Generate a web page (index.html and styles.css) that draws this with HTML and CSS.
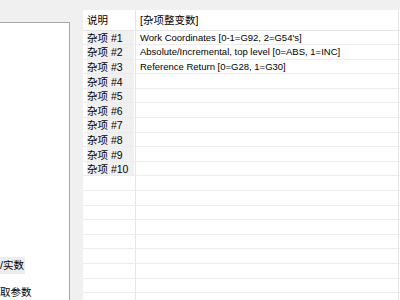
FILE: index.html
```html
<!DOCTYPE html>
<html lang="zh">
<head>
<meta charset="utf-8">
<title>杂项整变数</title>
<link rel="stylesheet" href="styles.css">
</head>
<body>
<div class="app">
  <div class="side">
    <ul class="tree">
      <li class="item"><span class="sel">/实数</span></li>
      <li class="item second"><span>取参数</span></li>
    </ul>
  </div>
  <div class="grid">
    <div class="row head"><div class="rh"><span class="hl">说明</span></div><div class="cell">[杂项整变数]</div></div>
    <div class="row"><div class="rh"><span class="lab">杂项 #1</span></div><div class="cell">Work Coordinates [0-1=G92, 2=G54's]</div></div>
    <div class="row"><div class="rh"><span class="lab">杂项 #2</span></div><div class="cell">Absolute/Incremental, top level [0=ABS, 1=INC]</div></div>
    <div class="row"><div class="rh"><span class="lab">杂项 #3</span></div><div class="cell">Reference Return [0=G28, 1=G30]</div></div>
    <div class="row"><div class="rh"><span class="lab">杂项 #4</span></div><div class="cell"></div></div>
    <div class="row"><div class="rh"><span class="lab">杂项 #5</span></div><div class="cell"></div></div>
    <div class="row"><div class="rh"><span class="lab">杂项 #6</span></div><div class="cell"></div></div>
    <div class="row"><div class="rh"><span class="lab">杂项 #7</span></div><div class="cell"></div></div>
    <div class="row"><div class="rh"><span class="lab">杂项 #8</span></div><div class="cell"></div></div>
    <div class="row"><div class="rh"><span class="lab">杂项 #9</span></div><div class="cell"></div></div>
    <div class="row"><div class="rh"><span class="lab">杂项 #10</span></div><div class="cell"></div></div>
    <div class="row"><div class="rh"></div><div class="cell"></div></div>
    <div class="row"><div class="rh"></div><div class="cell"></div></div>
    <div class="row"><div class="rh"></div><div class="cell"></div></div>
    <div class="row"><div class="rh"></div><div class="cell"></div></div>
    <div class="row"><div class="rh"></div><div class="cell"></div></div>
    <div class="row"><div class="rh"></div><div class="cell"></div></div>
    <div class="row"><div class="rh"></div><div class="cell"></div></div>
    <div class="row"><div class="rh"></div><div class="cell"></div></div>
    <div class="row"><div class="rh"></div><div class="cell"></div></div>
  </div>
</div>
</body>
</html>
```

FILE: styles.css
```css
html, body {
  margin: 0;
  padding: 0;
}
body {
  background: #f0f0f0;
  color: #000;
  font-family: "Liberation Sans", "Noto Sans CJK SC", sans-serif;
  width: 400px;
  height: 300px;
  overflow: hidden;
}
.app {
  display: flex;
  height: 300px;
  overflow: hidden;
}
.side {
  width: 69px;
  flex: none;
  margin-top: 22px;
  border-top: 1px solid #a5a5a5;
  border-right: 1px solid #a5a5a5;
  background: #fff;
}
.tree {
  list-style: none;
  margin: 0;
  padding: 234px 0 0 0;
}
.item {
  height: 17px;
  line-height: 17px;
  font-size: 10.5px;
  white-space: nowrap;
}
.item.second {
  margin-top: 10px;
}
.sel {
  display: inline-block;
  background: #ececec;
  padding-right: 1px;
}
.grid {
  flex: none;
  width: 317px;
  margin-left: 13px;
  margin-top: 10px;
  background: #fff;
  display: flex;
  flex-direction: column;
}
.row {
  flex: none;
  display: flex;
  height: 14.6px;
  box-sizing: border-box;
  border-bottom: 1px solid #ececec;
}
.row.head {
  height: 20.5px;
  border-bottom-color: #e6e6e6;
}
.rh {
  flex: none;
  width: 53px;
  box-sizing: border-box;
  padding-left: 4px;
  padding-right: 1px;
  border-right: 1px solid #e6e6e6;
  font-size: 10.5px;
  white-space: nowrap;
  display: flex;
}
.lab, .hl {
  flex: 1;
  display: flex;
  align-items: center;
  background: #f0f0f0;
}
.hl {
  background: #fff;
}
.cell {
  flex: none;
  width: 263px;
  box-sizing: border-box;
  padding-left: 4px;
  border-right: 1px solid #e6e6e6;
  font-size: 9.5px;
  white-space: nowrap;
  display: flex;
  align-items: center;
  overflow: hidden;
}
.head .cell {
  font-size: 10.5px;
}
```
